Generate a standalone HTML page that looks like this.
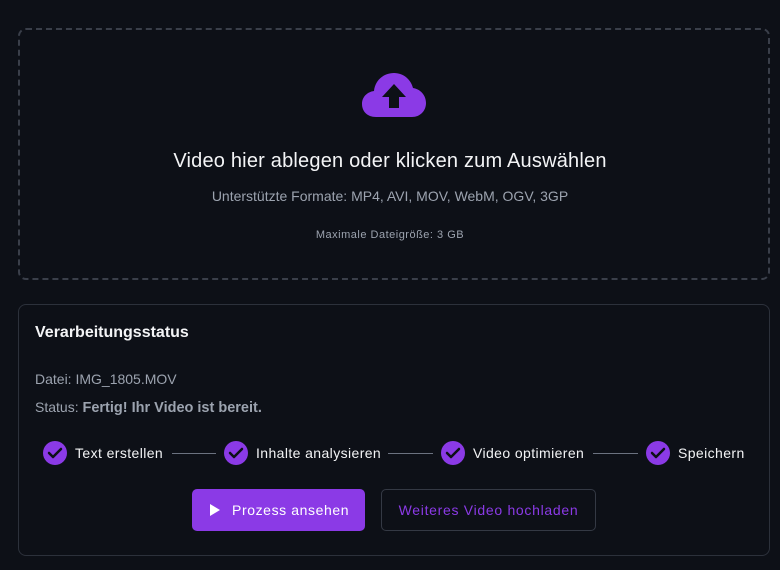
<!DOCTYPE html>
<html><head><meta charset="utf-8"><style>
*{box-sizing:border-box;margin:0;padding:0}
body{width:780px;height:570px;background:#0d1017;font-family:"Liberation Sans",sans-serif;position:relative;overflow:hidden;color:#f3f4f6}
.abs{position:absolute}
.drop{left:18px;top:28px;width:752px;height:252px;border:2px dashed #3a3f4a;border-radius:8px}
.card{left:18px;top:304px;width:752px;height:252px;border:1px solid #2c313b;border-radius:8px}
.c{left:0;width:780px;text-align:center}
.chk{width:24px;height:24px;border-radius:50%;background:#8b3ae6}
.step{top:444px;font-size:14px;color:#f3f4f6;line-height:18px;letter-spacing:0.4px}
.line{top:453px;height:1px;background:#6b7280}
</style></head><body>
<div class="abs drop"></div>
<svg class="abs" style="left:362px;top:72px" width="64" height="46" viewBox="0 0 64 46">
<path d="M14 45 C5 45 0 39 0 32 C0 25 5 20 12 19 C13 9 21 1 32 1 C42 1 49 8 51 16 C58 17 64 23 64 31 C64 39 58 45 50 45 Z" fill="#8b3ae6"/>
<path d="M32 12 L44 25 L37 25 L37 36 L27 36 L27 25 L20 25 Z" fill="#0d1017"/>
</svg>
<div class="abs c" style="top:150px;font-size:20px;letter-spacing:0.2px;color:#f3f4f6">Video hier ablegen oder klicken zum Auswählen</div>
<div class="abs c" style="top:188px;font-size:14px;color:#9ca3af">Unterstützte Formate: MP4, AVI, MOV, WebM, OGV, 3GP</div>
<div class="abs c" style="top:229px;font-size:11px;letter-spacing:0.5px;color:#9ca3af">Maximale Dateigröße: 3 GB</div>

<div class="abs card"></div>
<div class="abs" style="left:35px;top:324px;font-size:16px;font-weight:bold;color:#f3f4f6">Verarbeitungsstatus</div>
<div class="abs" style="left:35px;top:371px;font-size:14px;color:#9ca3af">Datei: IMG_1805.MOV</div>
<div class="abs" style="left:35px;top:399px;font-size:14px;color:#9ca3af">Status: <b style="font-size:14.5px">Fertig! Ihr Video ist bereit.</b></div>

<div class="abs chk" style="left:43px;top:441px"></div>
<div class="abs chk" style="left:224px;top:441px"></div>
<div class="abs chk" style="left:441px;top:441px"></div>
<div class="abs chk" style="left:646px;top:441px"></div>
<svg class="abs" style="left:0;top:0" width="780" height="570">
<g fill="none" stroke="#0d1017" stroke-width="2.5" stroke-linecap="round" stroke-linejoin="round">
<path d="M49 453 L53 457 L61 449"/><path d="M230 453 L234 457 L242 449"/><path d="M447 453 L451 457 L459 449"/><path d="M652 453 L656 457 L664 449"/>
</g></svg>
<div class="abs step" style="left:75px">Text erstellen</div>
<div class="abs line" style="left:172px;width:44px"></div>
<div class="abs step" style="left:256px">Inhalte analysieren</div>
<div class="abs line" style="left:388px;width:45px"></div>
<div class="abs step" style="left:473px">Video optimieren</div>
<div class="abs line" style="left:593px;width:45px"></div>
<div class="abs step" style="left:678px">Speichern</div>

<div class="abs" style="left:192px;top:489px;width:173px;height:42px;background:#8b3ae6;border-radius:5px;font-size:14px;color:#fff;line-height:42px">
<svg class="abs" style="left:18px;top:15px" width="10" height="12"><path d="M0 0 L10 6 L0 12Z" fill="#fff"/></svg>
<span class="abs" style="left:40px;letter-spacing:0.6px">Prozess ansehen</span></div>
<div class="abs" style="left:381px;top:489px;width:215px;height:42px;border:1px solid #343944;border-radius:5px;font-size:14px;color:#8b3ae6;line-height:40px;text-align:center;letter-spacing:0.7px">Weiteres Video hochladen</div>
</body></html>
